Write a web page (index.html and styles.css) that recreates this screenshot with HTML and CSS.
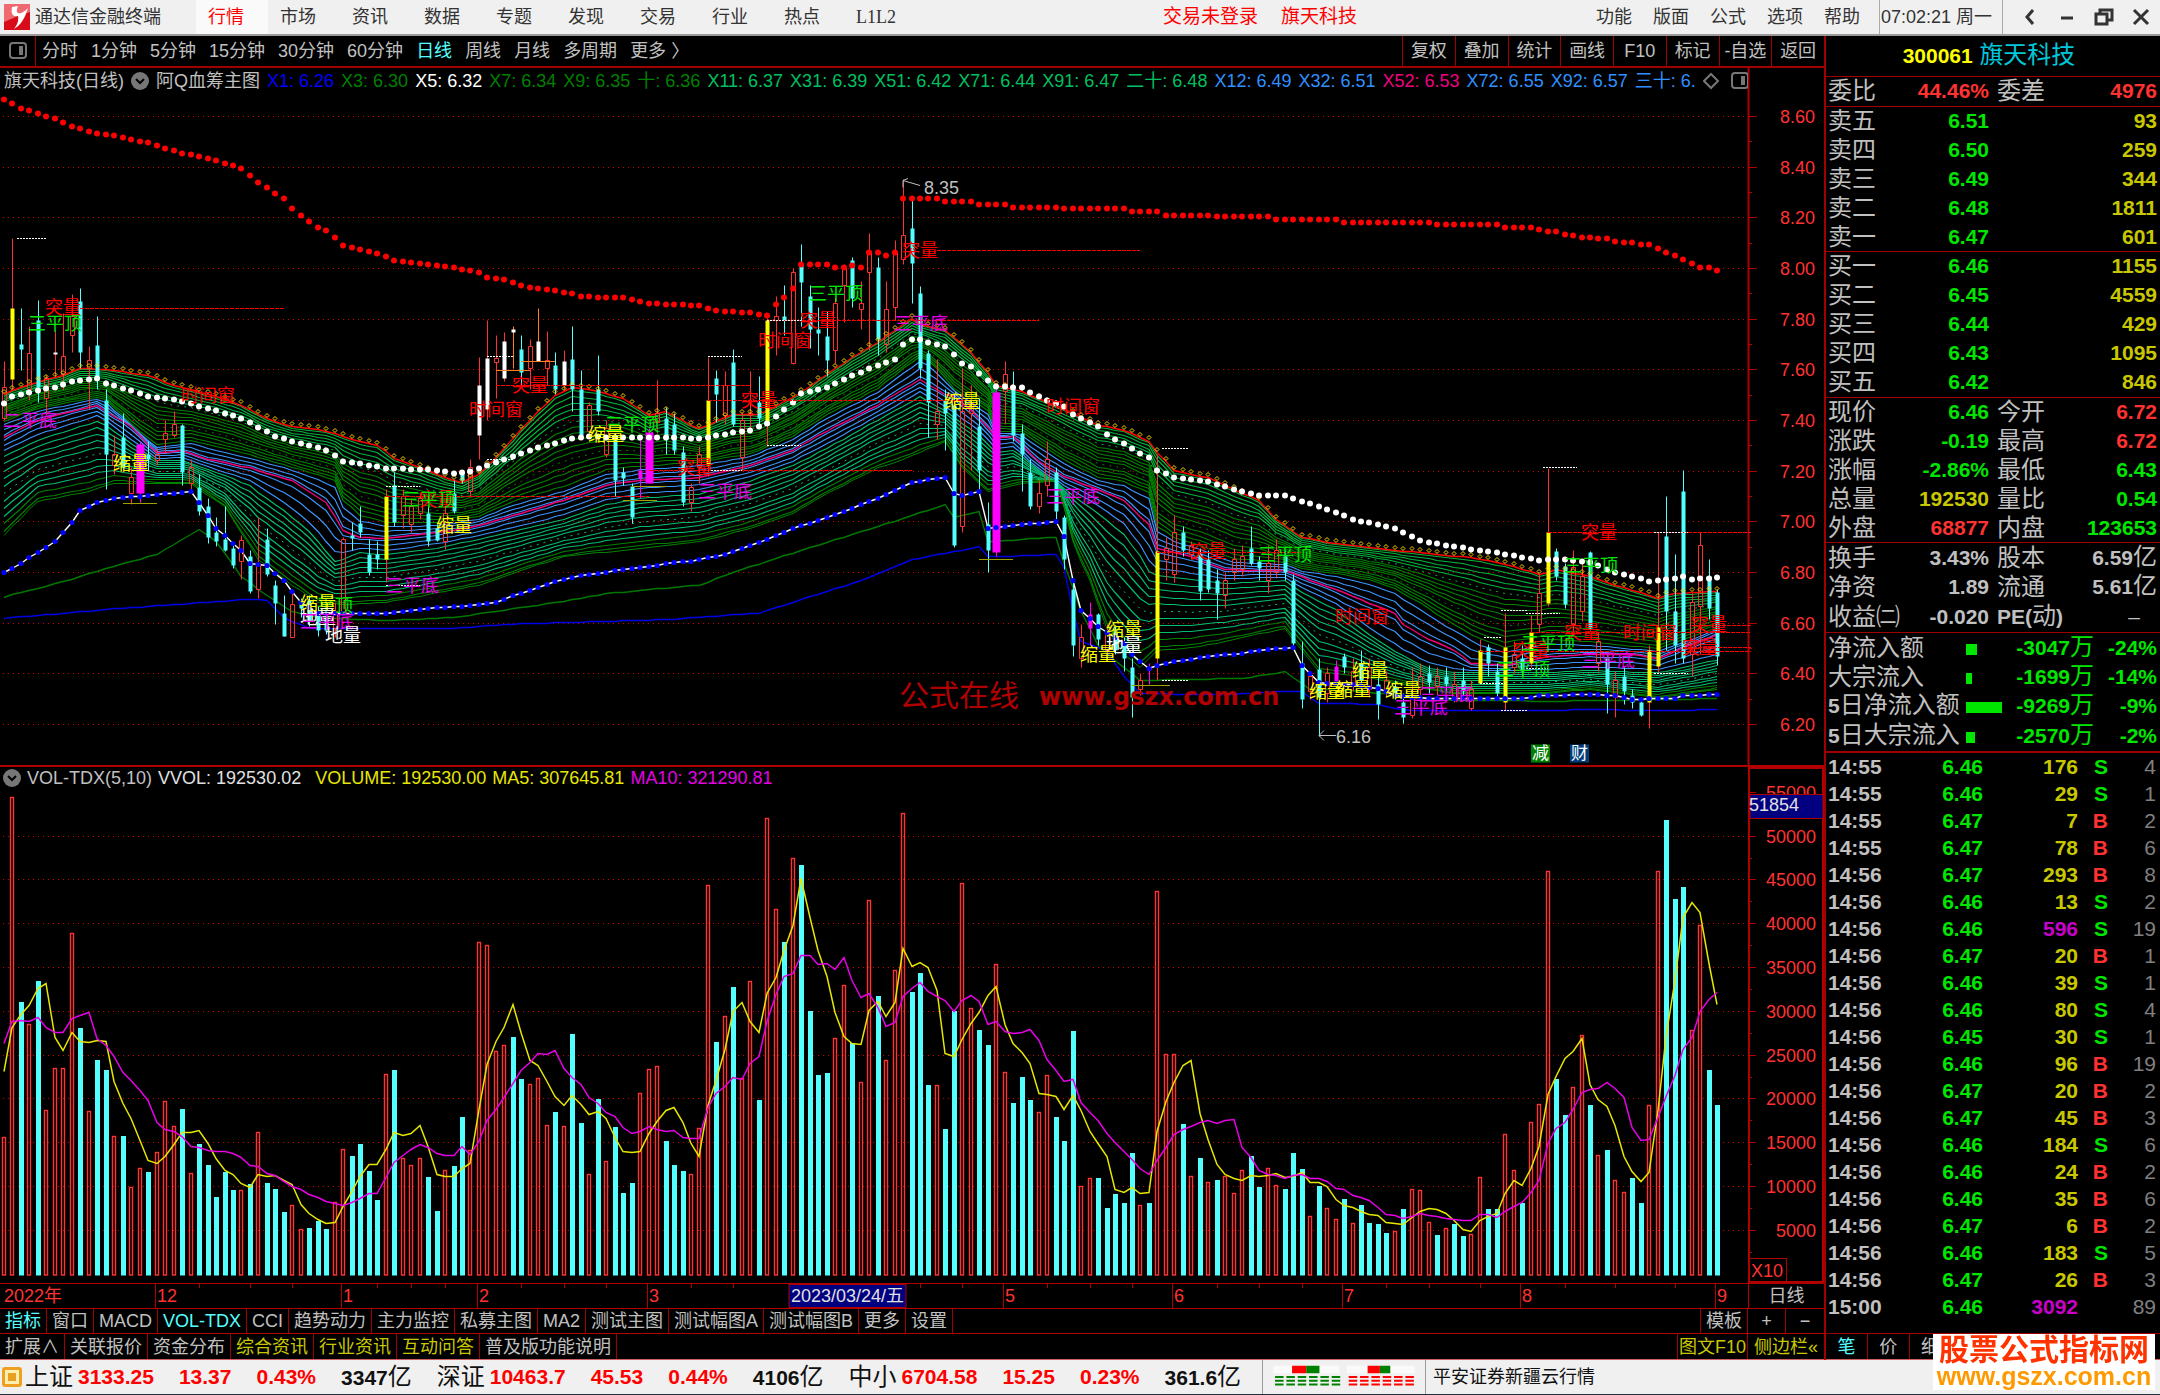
FILE: index.html
```html
<!DOCTYPE html>
<html lang="zh-CN">
<head>
  <meta charset="UTF-8" />
  <meta name="viewport" content="width=device-width, initial-scale=1.0"/>
  <title>通达信金融终端</title>
  <link rel="stylesheet" href="styles.css">
</head>
<body>
  <header class="topbar">
    <svg class="logo" viewBox="0 0 26 26">
      <rect width="26" height="26" fill="#d80c18"/>
      <path d="M0 0H26V8L14 12L0 18Z" fill="#ee6a70"/>
      <path d="M8 3C7 9 8 13 14 12C15 17 13 21 10 25C17 21 21 14 24 4C20 8 17 10 14 9C12 8 13 5 14 2Z" fill="#fff"/>
    </svg>
    <span class="app-name">通达信金融终端</span>
    <nav class="menu">
      <a href="#" class="active">行情</a>
      <a href="#">市场</a>
      <a href="#">资讯</a>
      <a href="#">数据</a>
      <a href="#">专题</a>
      <a href="#">发现</a>
      <a href="#">交易</a>
      <a href="#">行业</a>
      <a href="#">热点</a>
      <a href="#" class="serif">L1L2</a>
    </nav>
    <div class="login"><span>交易未登录</span><span>旗天科技</span></div>
    <nav class="tools">
      <a href="#">功能</a>
      <a href="#">版面</a>
      <a href="#">公式</a>
      <a href="#">选项</a>
      <a href="#">帮助</a>
    </nav>
    <time class="clock">07:02:21 周一</time>
    <div class="window-buttons">
      <button aria-label="后退"><svg viewBox="0 0 20 20"><path d="M13 3L7 10L13 17"/></svg></button>
      <button aria-label="最小化"><svg viewBox="0 0 20 20"><path d="M4 11H16"/></svg></button>
      <button aria-label="还原"><svg viewBox="0 0 20 20"><path d="M2 7H13V17H2ZM6 7V3H18V13H13"/></svg></button>
      <button aria-label="关闭"><svg viewBox="0 0 20 20"><path d="M3 3L17 17M17 3L3 17"/></svg></button>
    </div>
  </header>

  <main class="workspace">
    <section class="charts">
      <div class="toolbar">
        <button class="side-toggle" aria-label="侧栏"><svg viewBox="0 0 18 18"><rect x="1" y="1" width="16" height="15" rx="3"/><path d="M11 4V13M13 4V13"/></svg></button>
        <div class="periods">
          <button>分时</button>
          <button>1分钟</button>
          <button>5分钟</button>
          <button>15分钟</button>
          <button>30分钟</button>
          <button>60分钟</button>
          <button class="active">日线</button>
          <button>周线</button>
          <button>月线</button>
          <button>多周期</button>
          <button>更多 〉</button>
        </div>
        <div class="actions">
          <button>复权</button>
          <button>叠加</button>
          <button>统计</button>
          <button>画线</button>
          <button>F10</button>
          <button>标记</button>
          <button>-自选</button>
          <button>返回</button>
        </div>
      </div>

      <div class="panel price-panel">
        <svg class="plot" id="price-plot"></svg>
        <div class="legend">
          <span>旗天科技(日线)</span>
          <svg class="round" viewBox="0 0 18 18"><circle cx="9" cy="9" r="9"/><path d="M5 7L9 11L13 7"/></svg>
          <span>阿Q血筹主图</span>
          <span class="c-blue">X1: 6.26</span>
          <span class="c-dark">X3: 6.30</span>
          <span class="c-white">X5: 6.32</span>
          <span class="c-dark">X7: 6.34</span>
          <span class="c-dark">X9: 6.35</span>
          <span class="c-dark">十: 6.36</span>
          <span class="c-teal">X11: 6.37</span>
          <span class="c-teal">X31: 6.39</span>
          <span class="c-teal">X51: 6.42</span>
          <span class="c-teal">X71: 6.44</span>
          <span class="c-teal">X91: 6.47</span>
          <span class="c-teal">二十: 6.48</span>
          <span class="c-sky">X12: 6.49</span>
          <span class="c-sky">X32: 6.51</span>
          <span class="c-pink">X52: 6.53</span>
          <span class="c-sky">X72: 6.55</span>
          <span class="c-sky">X92: 6.57</span>
          <span class="c-sky">三十: 6.</span>
          <svg class="corner" viewBox="0 0 48 18"><path d="M8 2L15 9L8 16L1 9Z"/><rect x="29" y="1" width="16" height="15" rx="3"/><path d="M39 4V13M41 4V13"/></svg>
        </div>
      </div>

      <div class="panel volume-panel">
        <svg class="plot" id="volume-plot"></svg>
        <div class="legend compact">
          <svg class="round" viewBox="0 0 18 18"><circle cx="9" cy="9" r="9"/><path d="M5 7L9 11L13 7"/></svg>
          <span>VOL-TDX(5,10)</span>
          <span class="c-light wide">VVOL: 192530.02</span>
          <span class="c-yellow">VOLUME: 192530.00</span>
          <span class="c-yellow">MA5: 307645.81</span>
          <span class="c-magenta">MA10: 321290.81</span>
        </div>
      </div>

      <div class="dates">
        <svg id="date-plot"></svg>
        <span>日线</span>
      </div>

      <div class="tabs">
        <button class="active">指标</button>
        <button>窗口</button>
        <button>MACD</button>
        <button class="active">VOL-TDX</button>
        <button>CCI</button>
        <button>趋势动力</button>
        <button>主力监控</button>
        <button>私募主图</button>
        <button>MA2</button>
        <button>测试主图</button>
        <button>测试幅图A</button>
        <button>测试幅图B</button>
        <button>更多</button>
        <button>设置</button>
        <div class="tabs-end">
          <button>模板</button>
          <button class="zoom">+</button>
          <button class="zoom">−</button>
        </div>
      </div>

      <div class="tabs last">
        <button>扩展∧</button>
        <button>关联报价</button>
        <button>资金分布</button>
        <button class="gold">综合资讯</button>
        <button class="gold">行业资讯</button>
        <button class="gold">互动问答</button>
        <button>普及版功能说明</button>
        <div class="tabs-end">
          <button class="gold f10">图文F10</button>
          <button class="gold sidebar">侧边栏«</button>
        </div>
      </div>
    </section>

    <aside class="quote">
      <h1><b>300061</b> <span>旗天科技</span></h1>

      <table class="block">
        <tr><th>委比</th><td class="up">44.46%</td><th>委差</th><td class="up">4976</td></tr>
      </table>
      <table class="block">
        <tr><th>卖五</th><td class="down">6.51</td><td class="vol" colspan="2">93</td></tr>
        <tr><th>卖四</th><td class="down">6.50</td><td class="vol" colspan="2">259</td></tr>
        <tr><th>卖三</th><td class="down">6.49</td><td class="vol" colspan="2">344</td></tr>
        <tr><th>卖二</th><td class="down">6.48</td><td class="vol" colspan="2">1811</td></tr>
        <tr><th>卖一</th><td class="down">6.47</td><td class="vol" colspan="2">601</td></tr>
      </table>
      <table class="block">
        <tr><th>买一</th><td class="down">6.46</td><td class="vol" colspan="2">1155</td></tr>
        <tr><th>买二</th><td class="down">6.45</td><td class="vol" colspan="2">4559</td></tr>
        <tr><th>买三</th><td class="down">6.44</td><td class="vol" colspan="2">429</td></tr>
        <tr><th>买四</th><td class="down">6.43</td><td class="vol" colspan="2">1095</td></tr>
        <tr><th>买五</th><td class="down">6.42</td><td class="vol" colspan="2">846</td></tr>
      </table>
      <table class="block">
        <tr><th>现价</th><td class="down">6.46</td><th>今开</th><td class="up">6.72</td></tr>
        <tr><th>涨跌</th><td class="down">-0.19</td><th>最高</th><td class="up">6.72</td></tr>
        <tr><th>涨幅</th><td class="down">-2.86%</td><th>最低</th><td class="down">6.43</td></tr>
        <tr><th>总量</th><td class="vol">192530</td><th>量比</th><td class="down">0.54</td></tr>
        <tr><th>外盘</th><td class="up">68877</td><th>内盘</th><td class="down">123653</td></tr>
      </table>
      <table class="block padded">
        <tr><th>换手</th><td>3.43%</td><th>股本</th><td>6.59<i>亿</i></td></tr>
        <tr><th>净资</th><td>1.89</td><th>流通</th><td>5.61<i>亿</i></td></tr>
        <tr><th>收益㈡</th><td>-0.020</td><th><b>PE(</b>动<b>)</b></th><td class="none">–</td></tr>
      </table>
      <table class="block padded flow">
        <tr><th>净流入额</th><td><span class="bar" style="width: 11px"></span></td><td class="down">-3047<i>万</i></td><td class="down">-24%</td></tr>
        <tr><th>大宗流入</th><td><span class="bar" style="width: 6px"></span></td><td class="down">-1699<i>万</i></td><td class="down">-14%</td></tr>
        <tr><th><b>5</b>日净流入额</th><td><span class="bar" style="width: 36px"></span></td><td class="down">-9269<i>万</i></td><td class="down">-9%</td></tr>
        <tr><th><b>5</b>日大宗流入</th><td><span class="bar" style="width: 9px"></span></td><td class="down">-2570<i>万</i></td><td class="down">-2%</td></tr>
      </table>

      <div class="trades">
        <table>
          <tr><td>14:55</td><td>6.46</td><td>176</td><td class="down">S</td><td>4</td></tr>
          <tr><td>14:55</td><td>6.46</td><td>29</td><td class="down">S</td><td>1</td></tr>
          <tr><td>14:55</td><td>6.47</td><td>7</td><td class="up">B</td><td>2</td></tr>
          <tr><td>14:55</td><td>6.47</td><td>78</td><td class="up">B</td><td>6</td></tr>
          <tr><td>14:56</td><td>6.47</td><td>293</td><td class="up">B</td><td>8</td></tr>
          <tr><td>14:56</td><td>6.46</td><td>13</td><td class="down">S</td><td>2</td></tr>
          <tr><td>14:56</td><td>6.46</td><td class="big">596</td><td class="down">S</td><td>19</td></tr>
          <tr><td>14:56</td><td>6.47</td><td>20</td><td class="up">B</td><td>1</td></tr>
          <tr><td>14:56</td><td>6.46</td><td>39</td><td class="down">S</td><td>1</td></tr>
          <tr><td>14:56</td><td>6.46</td><td>80</td><td class="down">S</td><td>4</td></tr>
          <tr><td>14:56</td><td>6.45</td><td>30</td><td class="down">S</td><td>1</td></tr>
          <tr><td>14:56</td><td>6.46</td><td>96</td><td class="up">B</td><td>19</td></tr>
          <tr><td>14:56</td><td>6.47</td><td>20</td><td class="up">B</td><td>2</td></tr>
          <tr><td>14:56</td><td>6.47</td><td>45</td><td class="up">B</td><td>3</td></tr>
          <tr><td>14:56</td><td>6.46</td><td>184</td><td class="down">S</td><td>6</td></tr>
          <tr><td>14:56</td><td>6.46</td><td>24</td><td class="up">B</td><td>2</td></tr>
          <tr><td>14:56</td><td>6.46</td><td>35</td><td class="up">B</td><td>6</td></tr>
          <tr><td>14:56</td><td>6.47</td><td>6</td><td class="up">B</td><td>2</td></tr>
          <tr><td>14:56</td><td>6.46</td><td>183</td><td class="down">S</td><td>5</td></tr>
          <tr><td>14:56</td><td>6.47</td><td>26</td><td class="up">B</td><td>3</td></tr>
          <tr><td>15:00</td><td>6.46</td><td class="big">3092</td><td></td><td>89</td></tr>
        </table>
      </div>

      <div class="quote-tabs">
        <button class="active">笔</button>
        <button>价</button>
        <button>细</button>
      </div>
    </aside>
  </main>

  <footer class="status">
    <svg class="coin" viewBox="0 0 20 20"><rect width="20" height="20" rx="3" fill="#f0a020"/><rect x="3" y="3" width="14" height="14" fill="#fff0b0"/><rect x="6" y="6" width="8" height="8" fill="#e8a020"/></svg>
    <span class="index"><span>上证</span><b class="up">3133.25</b></span><b class="up">13.37</b><b class="up">0.43%</b><span><b>3347</b>亿</span>
    <span class="index"><span>深证</span><b class="up">10463.7</b></span><b class="up">45.53</b><b class="up">0.44%</b><span><b>4106</b>亿</span>
    <span class="index"><span>中小</span><b class="up">6704.58</b></span><b class="up">15.25</b><b class="up">0.23%</b><span><b>361.6</b>亿</span>
    <svg class="breadth" viewBox="0 0 162 36">
      <path d="M6 6H76V14H6ZM84 6H156V14H84Z" fill="#fafafa"/>
      <path d="M26 6H41V14H26ZM106 6H119V14H106Z" fill="#f00"/>
      <path d="M41 6H55V14H41ZM119 6H130V14H119Z" fill="#008000"/>
      <path d="M8 18H78M8 22H78M8 26H78" stroke="#008000" stroke-width="2" stroke-dasharray="9 3"/>
      <path d="M86 18H156M86 22H156M86 26H156" stroke="#f00" stroke-width="2" stroke-dasharray="9 3"/>
    </svg>
    <span class="server">平安证券新疆云行情</span>
  </footer>

  <div class="site-badge">
    <strong>股票公式指标网</strong>
    <span>www.gszx.com.cn</span>
  </div>

  <script src="chart.js"></script>
</body>
</html>
```

FILE: styles.css
```css
* {
  box-sizing: border-box;
}

body {
  margin: 0;
  height: 100vh;
  display: flex;
  flex-direction: column;
  overflow: hidden;
  background: #000;
  color: #c0c0c0;
  font-family: "Liberation Sans", "Noto Sans CJK SC", sans-serif;
  font-size: 18px;
  line-height: 24px;
}

button {
  font: inherit;
  color: inherit;
  background: none;
  border: none;
  padding: 0;
  margin: 0;
  white-space: nowrap;
  cursor: pointer;
}

a {
  color: inherit;
  text-decoration: none;
}

.up { color: #ff3232; }
.down { color: #00e600; }

/* top bar */
.topbar {
  flex: none;
  height: 36px;
  display: flex;
  align-items: center;
  background: #f0f0f0;
  color: #333;
  border-bottom: 2px solid #9a9a9a;
}

.logo {
  width: 26px;
  height: 26px;
  margin: 0 5px 0 4px;
}

.app-name {
  width: 161px;
}

.menu {
  display: flex;
  align-self: stretch;
}

.menu a {
  width: 72px;
  padding-left: 12px;
  line-height: 34px;
}

.menu .active {
  background: #fafafa;
  color: #f00;
}

.serif {
  font-family: "Liberation Serif", serif;
}

.login {
  display: flex;
  gap: 23px;
  margin: 0 auto;
  padding-left: 8px;
  font-size: 19px;
  color: #f00;
}

.tools {
  display: flex;
  gap: 21px;
  margin-right: 19px;
}

.clock {
  width: 124px;
  padding-left: 1px;
  line-height: 34px;
  white-space: nowrap;
  border-left: 1px solid #aaa;
  border-right: 1px solid #aaa;
}

.window-buttons {
  display: flex;
  gap: 17px;
  padding: 0 9px 0 17px;
}

.window-buttons svg {
  display: block;
  width: 20px;
  height: 20px;
  fill: none;
  stroke: #333;
  stroke-width: 3;
}

/* layout */
.workspace {
  flex: 1;
  min-height: 0;
  display: flex;
}

.charts {
  flex: 1;
  min-width: 0;
  display: flex;
  flex-direction: column;
}

/* period toolbar */
.toolbar {
  flex: none;
  height: 32px;
  display: flex;
  align-items: stretch;
  border-bottom: 2px solid #a00000;
}

.toolbar svg,
.corner {
  fill: none;
  stroke: #777;
  stroke-width: 2;
}

.side-toggle {
  width: 36px;
  border-right: 1px solid #a00000;
}

.side-toggle svg {
  display: block;
  width: 18px;
  height: 18px;
  margin: 0 auto;
}

.periods {
  display: flex;
  gap: 13px;
  padding-left: 6px;
}

.periods .active,
.tabs .active,
.quote-tabs .active {
  color: #54ffff;
}

.actions {
  width: 422px;
  margin-left: auto;
  display: grid;
  grid-template-columns: repeat(8, 1fr);
}

.actions button {
  border-left: 1px solid #a00000;
}

/* chart panels */
.panel {
  display: grid;
  min-height: 0;
  grid-template-rows: minmax(0, 1fr);
  grid-template-columns: minmax(0, 1fr);
}

.price-panel {
  flex: 698 1 0;
  border-bottom: 2px solid #b00000;
}

.volume-panel {
  flex: 517 1 0;
}

.plot,
.legend {
  grid-area: 1 / 1;
}

.plot {
  width: 100%;
  height: 100%;
}

.legend {
  align-self: start;
  display: flex;
  align-items: center;
  gap: 7px;
  height: 26px;
  margin-right: 76px;
  padding-left: 4px;
  white-space: nowrap;
  overflow: hidden;
}

.legend.compact {
  gap: 6px;
  height: 22px;
  padding-left: 3px;
}

.round {
  width: 18px;
  height: 18px;
  flex: none;
  fill: #777;
}

.round path {
  fill: none;
  stroke: #000;
  stroke-width: 2;
}

.corner {
  width: 48px;
  height: 18px;
  flex: none;
  margin-left: auto;
  margin-right: 5px;
}

.c-blue { color: #0000ff; }
.c-dark { color: #008000; }
.c-white { color: #fff; }
.c-light { color: #e0e0e0; }
.c-teal { color: #00c060; }
.c-sky { color: #3090ff; }
.c-pink { color: #f00080; }
.c-yellow { color: #e6e600; }
.c-magenta { color: #e600e6; }

.wide {
  margin-right: 8px;
}

/* svg text */
.plot text,
.dates text {
  font-size: 18px;
  dominant-baseline: central;
}

.plot .mark-zh {
  font-size: 30px;
}

.plot .mark-en {
  font-family: "DejaVu Sans", sans-serif;
  font-size: 24px;
  font-weight: bold;
}

.plot .flag {
  font-size: 17px;
}

/* dates */
.dates {
  flex: none;
  height: 25px;
  display: flex;
  border-top: 1px solid #b00000;
}

.dates svg {
  flex: 1;
  min-width: 0;
  height: 24px;
}

.dates span {
  width: 76px;
  text-align: center;
  border-left: 1px solid #b00000;
}

/* tabs */
.tabs {
  flex: none;
  height: 25px;
  display: flex;
  align-items: stretch;
  border-top: 1px solid #b00000;
}

.tabs.last {
  height: 27px;
  border-bottom: 1px solid #d06060;
}

.tabs button {
  padding: 0 5px;
  line-height: 22px;
  border-right: 1px solid #a00000;
}

.tabs-end {
  display: flex;
  margin-left: auto;
  border-left: 1px solid #a00000;
}

.tabs .zoom {
  width: 38px;
}

.tabs .f10 {
  padding: 0 1px;
}

.tabs .sidebar {
  width: 76px;
  padding: 0;
}

.tabs-end button:last-child {
  border-right: none;
}

.gold {
  color: #c8c800;
}

/* quote panel */
.quote {
  width: 336px;
  flex: none;
  display: flex;
  flex-direction: column;
  border-left: 2px solid #a00000;
}

.quote h1 {
  flex: none;
  height: 40px;
  margin: 0;
  padding-right: 8px;
  text-align: center;
  line-height: 38px;
  font-size: 24px;
  font-weight: normal;
  color: #00c8dc;
}

.quote h1 b {
  font-size: 21px;
  color: #ff0;
}

.quote table {
  width: 100%;
  table-layout: fixed;
  border-collapse: collapse;
}

.quote td,
.quote th {
  padding: 0;
  white-space: nowrap;
}

.block {
  flex: none;
  border-top: 1px solid #a00000;
}

.block tr {
  height: 29px;
}

.block th {
  width: 72px;
  padding-left: 2px;
  text-align: left;
  font-size: 24px;
  line-height: 28px;
  font-weight: normal;
}

.block th b {
  font-size: 21px;
}

.block th:nth-child(3) {
  width: 84px;
  padding-left: 8px;
}

.block td {
  padding-right: 3px;
  text-align: right;
  font-size: 21px;
  line-height: 28px;
  font-weight: bold;
}

.block td:nth-child(2) {
  width: 91px;
  padding: 0;
}

.block i {
  font-size: 24px;
  font-style: normal;
  font-weight: normal;
}

.block .vol {
  color: #c8c800;
}

.block .none {
  padding-right: 20px;
  font-weight: normal;
}

.padded tr:last-child {
  height: 31px;
}

.flow th {
  width: 140px;
}

.flow td:nth-child(2) {
  width: 38px;
  text-align: left;
}

.flow td:nth-child(3) {
  width: 90px;
  padding: 0;
}

.bar {
  display: inline-block;
  height: 11px;
  background: #00e600;
}

/* trades */
.trades {
  flex: 1;
  min-height: 0;
  overflow: hidden;
  border-top: 2px solid #a00000;
}

.trades tr {
  height: 27px;
}

.trades td {
  text-align: right;
  font-size: 21px;
  font-weight: bold;
}

.trades td:nth-child(1) {
  width: 72px;
  padding-left: 2px;
  text-align: left;
}

.trades td:nth-child(2) {
  width: 85px;
  color: #00e600;
}

.trades td:nth-child(3) {
  width: 95px;
  color: #c8c800;
}

.trades td:nth-child(4) {
  width: 30px;
}

.trades td:nth-child(5) {
  padding-right: 4px;
  color: #808080;
  font-weight: normal;
}

.trades td.big:nth-child(3) {
  color: #c800c8;
}

.quote-tabs {
  flex: none;
  height: 27px;
  display: grid;
  grid-template-columns: repeat(8, 1fr);
  border-top: 1px solid #a00000;
  border-bottom: 1px solid #d06060;
}

.quote-tabs button {
  border-right: 1px solid #a00000;
}

/* status bar */
.status {
  flex: none;
  height: 35px;
  display: flex;
  align-items: center;
  gap: 25px;
  background: #f0f0f0;
  color: #111;
  font-size: 24px;
  white-space: nowrap;
  border-bottom: 1px solid #203040;
}

.status b {
  font-size: 21px;
}

.status .up {
  color: #f00;
}

.coin {
  width: 20px;
  height: 20px;
  margin: 0 -22px 0 2px;
}

.index {
  display: flex;
  align-items: center;
  gap: 5px;
}

.breadth {
  width: 164px;
  height: 34px;
  margin: 0 -18px 0 -4px;
  border-left: 1px solid #999;
  border-right: 1px solid #999;
}

.server {
  font-size: 18px;
}

.site-badge {
  position: fixed;
  right: 5px;
  bottom: 5px;
  width: 222px;
  height: 56px;
  background: #fff;
  text-align: center;
}

.site-badge strong,
.site-badge span {
  display: block;
}

.site-badge strong {
  color: #ff3300;
  font-size: 30px;
  line-height: 32px;
}

.site-badge span {
  color: #ff9900;
  font-size: 25px;
  line-height: 20px;
  font-weight: bold;
}
```

FILE: chart.js
```js
const RED = "#ff3232";
const CYAN = "#54ffff";
const LINE = "#b00000";
const AXIS = 76;
const BARS = 203;

// r up, c down, y volume burst, w white, m shrink, o doji: high, body top, body bottom, low
const candles = `
r 625 685 755 760|y 342 503 667 690|c 503 585 596 645|r 545 607 690 715|c 485 530 685 720|r 657 665 710 750|w 550 605 609 660|r 515 613 655 690
r 470 520 565 605|c 457 487 605 640|r 590 622 640 735|c 520 588 665 690|c 690 715 840 920|r 795 840 865 885|c 745 800 870 872|r 870 892 930 955
m 810 817 930 950|c 810 840 850 875|r 825 838 852 865|r 760 790 805 835|r 740 770 795 800|c 770 773 880 910|r 850 870 905 920|c 885 915 970 980
c 940 960 1030 1045|c 985 1020 1040 1052|c 960 1035 1060 1062|c 1045 1055 1095 1103|r 1025 1038 1085 1128|c 1060 1075 1155 1160|r 985 1090 1150 1172|c 1010 1035 1115 1120
c 1130 1140 1183 1230|c 1165 1205 1258 1258|r 1150 1185 1260 1262|c 1170 1180 1195 1215|c 1165 1175 1225 1235|c 1190 1205 1245 1258|c 1200 1215 1245 1255|r 1180 1200 1240 1260
r 1030 1035 1205 1210|c 995 1025 1032 1060|c 958 998 1018 1030|c 1035 1070 1110 1118|c 1040 1070 1082 1105|y 920 935 1080 1135|c 880 910 995 1005|r 920 935 980 1010
r 940 960 1000 1018|r 930 940 975 990|c 960 975 1040 1052|c 1000 1010 1038 1040|r 960 975 1040 1058|c 900 930 970 975|c 875 882 900 905|r 850 870 925 935
w 615 680 795 850|w 530 618 735 760|r 565 618 628 710|w 558 578 663 670|o 545 550 557 640|c 565 597 650 680|r 575 590 640 690|o 503 578 625 625
r 555 622 640 680|c 605 635 690 700|w 600 625 680 690|c 545 620 690 740|c 645 690 795 800|r 720 725 785 790|c 612 690 740 750|r 760 780 840 845
c 790 800 900 935|c 870 880 895 910|c 905 912 985 997|m 800 875 895 940|m 780 788 905 905|r 668 745 765 790|c 730 755 805 840|c 745 770 830 840
c 820 835 950 960|r 905 915 950 970|r 820 840 870 905|y 615 715 865 890|c 645 665 700 765|r 648 680 750 770|c 597 628 770 775|r 745 760 845 875
r 648 745 750 790|c 660 720 755 780|y 525 530 773 820|r 475 520 530 610|c 450 520 530 565|r 410 420 630 632|c 355 402 442 545|c 450 475 550 595
c 500 550 560 612|c 510 567 623 660|r 480 490 600 630|r 400 408 450 535|c 385 392 480 500|r 440 490 505 552|r 330 370 420 600|c 385 408 575 610
r 440 505 585 605|r 345 375 500 530|r 205 335 390 400|c 250 318 398 490|c 452 468 640 665|c 600 607 720 800|r 620 740 770 805|c 690 715 745 830
c 700 725 1050 1053|r 640 740 1005 1018|r 680 720 745 875|c 710 775 875 930|c 950 1000 1060 1110|m 675 697 1065 1075|r 625 655 695 770|c 648 690 795 810
c 770 790 840 925|c 850 880 960 965|r 900 930 960 975|r 810 850 910 935|c 870 880 970 990|c 980 985 1080 1105|c 1130 1150 1280 1305|r 1230 1260 1310 1330
m 1180 1207 1240 1280|c 1205 1207 1265 1280|r 1230 1250 1290 1310|c 1235 1250 1290 1300|c 1260 1280 1310 1340|c 1310 1330 1400 1445|r 1345 1360 1380 1395|m 1320 1330 1338 1370
y 840 1063 1310 1360|r 1030 1055 1080 1130|r 980 1020 1115 1135|c 1005 1018 1060 1075|r 1040 1050 1070 1080|c 1055 1070 1155 1175|c 1060 1080 1150 1158|c 1105 1130 1160 1220
r 1110 1130 1165 1195|r 1055 1080 1110 1130|r 1050 1075 1105 1120|c 1005 1055 1090 1095|c 1075 1085 1103 1130|r 1050 1090 1130 1160|r 1035 1060 1110 1125|c 1060 1075 1110 1130
c 1115 1130 1275 1285|c 1270 1320 1405 1425|r 1340 1350 1385 1405|c 1310 1335 1400 1488|r 1330 1345 1390 1410|m 1315 1327 1362 1370|c 1298 1305 1330 1345|r 1310 1340 1370 1385
c 1290 1320 1360 1380|r 1310 1330 1380 1400|c 1345 1370 1415 1450|r 1340 1360 1390 1400|c 1360 1375 1400 1405|c 1390 1410 1445 1460|r 1330 1400 1440 1448|r 1320 1350 1380 1400
c 1325 1345 1365 1390|r 1330 1350 1375 1395|c 1330 1350 1370 1385|r 1340 1370 1400 1410|c 1330 1360 1385 1400|r 1360 1380 1425 1430|y 1265 1290 1367 1370|c 1278 1285 1320 1350
c 1320 1340 1390 1400|y 1205 1285 1410 1430|r 1270 1300 1330 1345|c 1280 1310 1340 1350|y 1210 1250 1320 1330|r 1115 1160 1230 1250|y 872 1018 1183 1190|c 1055 1062 1120 1130
c 1090 1098 1185 1195|r 1060 1100 1230 1250|r 1080 1120 1200 1225|c 1062 1065 1240 1245|r 1250 1270 1320 1340|c 1300 1310 1370 1435|r 1340 1360 1400 1445|c 1330 1350 1385 1415
c 1380 1395 1410 1425|c 1400 1410 1440 1442|y 1280 1290 1410 1470|y 1020 1238 1327 1345|c 935 1027 1200 1290|c 1070 1200 1280 1320|c 877 925 1310 1320|r 1160 1180 1300 1350
r 1020 1050 1190 1300|c 1080 1120 1195 1220|c 1150 1158 1305 1325`.trim().split(/[|\n]/).map(s => {
  const [kind, ...v] = s.split(" ");
  return [kind, ...v.map(Number)];
});

const volumes = `
r1125 r103 c719 r788 c656 r1045 r918 r918 r513 c800 r1048 c894 c926 r1124 c1124 r1277 r1220 c1232 r1170 r1017 r1093 c1043 r1233 c1146 c1210
c1308 c1232 c1286 r1287 c1268 r1110 c1263 c1281 c1353 r1332 r1404 c1399 c1380 c1403 r1323 r1161 c1183 c1146 c1227 c1317 r936 c926 r1188 r1211 r1188
c1246 c1349 r1224 c1214 c1065 r1165 r540 r549 r869 r851 c827 c953 r967 r949 r1089 c1052 r1093 c818 c1083 r1238 c1011 r1197 c1097 c1295 c1263
r995 r922 r913 c1138 c1210 c1228 r1238 r1098 r370 c840 r761 c674 r950 r657 c1016 r166 r441 c539 r288 c308 c746 c939 c935 r828 r670
c845 r962 r414 c702 r895 r625 r152 c691 c632 c970 r971 c1101 c747 r364 r738 c804 c849 r607 r931 c1025 c947 c1016 r1052 r940 c1065
c1137 c809 r1273 r1250 c1249 c1340 c1299 c1326 c1173 r1332 c1326 r387 r877 r877 c1087 r1242 c1190 r1260 c1254 r1242 r1296 r1224 c1182 c1276 r1219
r1269 c1281 c1173 c1222 r1363 c1272 r1341 r1372 c1312 r1386 c1331 c1384 c1389 c1416 r1408 c1344 r1282 r1287 r1382 c1420 r1399 c1389 c1425 r1417 r1246
c1344 c1344 r1116 r1224 c1326 r1080 r1026 r328 c952 c1061 r976 r819 c1029 r1180 c1164 r1255 r1291 c1249 c1326 r1030 r328 c173 c412 c376 r805
r490 c926 c1029`.trim().split(/\s+/).map(s => [s[0], 1541 - Number(s.slice(1))]);

// curves: bar index, level
const resistance = [[0,20],[2,41],[6,65],[8,83],[11,100],[13,104],[17,121],[21,145],[24,156],[28,180],[30,211],[33,249],[34,273],[37,315],[38,322],[40,357],[44,375],[46,391],[49,399],[53,408],[56,419],[57,432],[59,436],[61,450],[67,468],[68,475],[73,478],[76,491],[82,496],[84,508],[88,512],[90,519],[91,494],[92,478],[93,457],[94,402],[97,402],[98,408],[99,408],[100,403],[101,408],[102,373],[103,373],[104,380],[105,373],[106,248],[110,249],[111,256],[114,256],[115,263],[118,263],[119,270],[124,270],[125,273],[132,273],[133,280],[136,280],[137,287],[142,287],[143,290],[149,290],[150,297],[157,297],[158,304],[168,304],[169,308],[176,308],[177,315],[180,315],[182,325],[183,325],[184,331],[186,338],[189,342],[190,349],[192,350],[193,356],[194,356],[196,373],[198,390],[200,408],[201,408],[202,414]];

const middle = [[0,722],[1,706],[4,691],[6,685],[8,671],[11,664],[12,675],[15,692],[17,706],[20,713],[22,722],[25,738],[28,755],[31,787],[32,798],[35,813],[38,829],[39,841],[40,855],[42,860],[45,871],[51,875],[53,882],[55,879],[58,857],[60,843],[63,824],[67,802],[69,798],[75,801],[79,800],[82,803],[85,792],[88,783],[90,768],[93,720],[94,698],[97,685],[100,658],[103,633],[105,619],[106,585],[107,575],[108,575],[111,591],[112,608],[113,629],[114,636],[116,668],[117,682],[120,685],[122,706],[125,729],[126,747],[129,775],[130,793],[132,814],[135,847],[136,877],[138,891],[142,902],[145,920],[148,933],[151,934],[154,953],[157,973],[159,988],[164,1010],[165,1018],[167,1038],[171,1051],[176,1066],[181,1083],[183,1080],[187,1088],[190,1111],[194,1131],[196,1128],[198,1121],[199,1127],[202,1123]];

const upper = [[0,700],[1,692],[4,672],[7,657],[9,640],[12,643],[17,657],[20,680],[25,706],[28,725],[31,757],[34,775],[38,785],[42,810],[44,818],[46,848],[49,868],[52,893],[54,904],[56,886],[59,825],[62,760],[65,702],[67,685],[70,693],[73,711],[75,735],[76,750],[78,740],[81,772],[82,780],[84,763],[86,746],[89,748],[91,728],[94,697],[97,655],[100,615],[103,580],[106,540],[107,525],[108,540],[111,553],[113,585],[114,603],[116,650],[117,680],[120,695],[125,735],[129,772],[132,783],[135,808],[136,835],[138,877],[142,893],[145,920],[148,945],[150,990],[153,1030],[157,1045],[164,1060],[173,1077],[177,1092],[181,1115],[183,1105],[187,1120],[190,1140],[194,1163],[195,1170],[197,1160],[202,1155]];

const blueTop = [[0,765],[4,735],[11,709],[12,715],[16,790],[18,820],[22,810],[28,838],[33,865],[39,902],[40,950],[42,985],[45,1000],[51,1000],[56,985],[60,952],[66,920],[71,880],[75,870],[82,860],[88,840],[93,800],[97,750],[103,690],[108,615],[109,625],[111,665],[112,690],[116,740],[117,790],[120,790],[125,855],[129,895],[132,905],[135,930],[136,1010],[138,1035],[142,1060],[145,1085],[151,1090],[153,1105],[157,1115],[161,1130],[164,1150],[167,1185],[170,1225],[174,1270],[177,1290],[182,1270],[187,1275],[192,1285],[195,1290],[198,1270],[202,1240]];

const pink = [[0,800],[4,760],[11,725],[12,740],[15,775],[18,835],[21,830],[24,850],[29,870],[34,900],[38,950],[40,1015],[42,1030],[45,1033],[51,1020],[56,1003],[60,980],[66,945],[71,910],[75,898],[82,893],[88,865],[93,830],[97,785],[103,725],[108,667],[111,700],[112,705],[115,755],[117,800],[119,798],[122,855],[125,890],[129,920],[132,945],[135,1000],[136,1055],[140,1075],[144,1105],[151,1107],[157,1150],[164,1205],[165,1230],[168,1265],[171,1290],[173,1320],[177,1325],[182,1305],[187,1300],[192,1300],[195,1310],[198,1285],[202,1255]];

const blueBottom = [[0,835],[4,800],[11,755],[12,765],[15,810],[18,850],[21,850],[24,870],[29,905],[33,960],[36,1010],[39,1080],[40,1075],[42,1060],[45,1065],[51,1050],[56,1030],[60,1012],[66,985],[71,950],[75,935],[82,925],[88,895],[93,860],[97,820],[103,755],[108,700],[111,735],[115,790],[117,830],[119,825],[122,875],[125,915],[129,965],[132,1010],[134,1060],[135,1100],[136,1110],[140,1120],[144,1130],[151,1125],[153,1150],[157,1190],[161,1250],[164,1290],[168,1330],[171,1340],[182,1340],[187,1335],[195,1340],[202,1310]];

const greenBottom = [[0,1025],[4,947],[10,925],[13,905],[22,905],[26,960],[30,1080],[34,1140],[37,1180],[40,1185],[45,1180],[56,1140],[62,1100],[66,1075],[75,1055],[82,1040],[88,1010],[93,975],[97,930],[103,870],[106,850],[111,810],[113,870],[116,925],[120,905],[124,900],[125,960],[126,1040],[128,1130],[130,1240],[132,1300],[134,1330],[136,1290],[140,1285],[144,1270],[151,1240],[153,1290],[155,1340],[160,1350],[168,1380],[171,1390],[182,1390],[187,1380],[195,1400],[202,1380]];

const support = [[0,1112],[2,1090],[6,1040],[7,1020],[8,995],[9,968],[11,950],[13,940],[16,935],[19,930],[22,925],[23,950],[25,1010],[28,1060],[29,1090],[31,1095],[33,1130],[35,1180],[37,1205],[45,1205],[51,1191],[54,1190],[58,1180],[60,1165],[65,1132],[67,1122],[71,1110],[75,1100],[79,1088],[81,1085],[85,1070],[88,1050],[90,1035],[93,1010],[97,985],[101,955],[103,940],[107,903],[111,892],[112,928],[113,933],[115,925],[116,1010],[119,1003],[124,993],[125,1028],[126,1130],[127,1198],[129,1235],[132,1275],[133,1300],[135,1333],[137,1320],[142,1305],[146,1297],[148,1290],[152,1284],[153,1325],[155,1365],[159,1370],[162,1378],[164,1395],[168,1402],[179,1402],[181,1395],[187,1392],[190,1395],[192,1403],[197,1402],[198,1395],[202,1392]];

const deepGreen = [[0,1168],[8,1127],[12,1102],[18,1070],[23,1012],[25,1040],[28,1120],[31,1165],[34,1200],[37,1215],[45,1222],[53,1215],[60,1195],[66,1178],[71,1160],[82,1140],[88,1098],[94,1060],[103,1005],[111,955],[112,985],[115,970],[116,1040],[120,1035],[124,1030],[125,1090],[127,1200],[129,1280],[132,1330],[134,1360],[146,1355],[151,1340],[154,1380],[160,1385],[170,1405],[182,1408],[202,1402]];

const deepBlue = [[0,1217],[13,1195],[29,1173],[31,1175],[33,1215],[36,1240],[53,1240],[60,1230],[71,1224],[78,1220],[85,1210],[89,1205],[101,1130],[107,1082],[115,1052],[116,1075],[124,1070],[125,1100],[126,1200],[127,1270],[130,1290],[132,1350],[134,1390],[144,1393],[151,1385],[153,1385],[155,1413],[162,1415],[165,1428],[179,1430],[188,1427],[195,1430],[202,1427]];

// signal text: bar, level, text, colour
const signals = [
  [5,500,"突量","#f00"],[3,538,"三平顶","#00e600"],[0,760,"二平底","#e600e6"],[13,860,"缩量","#ff0"],[21,704,"时间窗","#f00"],
  [60,680,"突量","#f00"],[55,735,"时间窗","#f00"],[71,770,"三平顶","#00e600"],[69,793,"缩量","#ff0"],[79.5,870,"突量","#f00"],
  [82,925,"三平底","#e600e6"],[87,715,"突量","#f00"],[89,577,"时间窗","#f00"],[94,530,"突量","#f00"],[95,468,"三平顶","#00e600"],
  [49,942,"突量","#f00"],[47,942,"三平顶","#00e600"],[51,1003,"缩量","#ff0"],[45,1140,"三平底","#e600e6"],
  [37,1188,"平顶","#00e600"],[35,1183,"缩量","#ff0"],[35,1215,"地量","#fff"],[35,1225,"三平底","#e600e6"],[38,1257,"地量","#fff"],
  [106,368,"突量","#f00"],[105,538,"三平底","#e600e6"],[111,718,"缩量","#ff0"],[123,728,"时间窗","#f00"],[123,935,"三平底","#e600e6"],
  [140,1062,"突量","#f00"],[148,1070,"三平顶","#00e600"],[157,1212,"时间窗","#f00"],[130,1242,"缩量","#ff0"],[130,1280,"地量","#fff"],
  [127,1300,"缩量","#ff0"],[159,1338,"缩量","#ff0"],[154,1385,"缩量","#ff0"],[157,1380,"缩量","#ff0"],[163,1383,"缩量","#ff0"],
  [167,1392,"三平底","#e600e6"],[164,1422,"三平底","#e600e6"],[186,1018,"突量","#f00"],[184,1096,"三平顶","#00e600"],
  [184,1250,"突量","#f00"],[191,1250,"时间窗","#f00"],[199,1230,"突量","#f00"],[198,1285,"突量","#f00"],[178,1290,"突量","#f00"],
  [179,1275,"三平顶","#00e600"],[176,1335,"三平顶","#00e600"],[186,1315,"三平底","#e600e6"]
];

// horizontal levels: from bar, to bar, level
const redLevels = [[9,33,503],[58,88,680],[90,122,530],[83,115,715],[45,76,936],[76,107,877],[110,134,369],[136,153,1065],[182,206,1018],[180,206,1250],[199,206,1233],[174,206,1293],[198,206,1285]];
const whiteLevels = [[1.5,5,341],[57,60,614],[57,60,850],[45,49,912],[45,49,1140],[83,87,614],[83,87,877],[90,94,530],[90,94,818],[136.5,139.6,825],[136.5,139.6,1361],[181.5,185.5,870],[176.5,179.7,1198],[179.5,183.5,1206],[174.5,176.6,1262],[176.5,179.7,1430],[174,177,1368],[179.5,182,1333],[194.5,198.5,1019],[194.5,198.5,1344]];
const oliveLevels = [[14,18,953],[73,77,946],[74,78,912],[115,119,1081],[133,137.5,1372]];
const orangeLevels = [[58,62,645],[61,65,625]];

function at(curve, i) {
  for (let k = 1; k < curve.length; k++) {
    if (i <= curve[k][0]) {
      const [x0, y0] = curve[k - 1];
      const [x1, y1] = curve[k];
      return y0 + (y1 - y0) * (i - x0) / (x1 - x0);
    }
  }
  return curve[curve.length - 1][1];
}

function polyline(points, color, extra = "") {
  return `<polyline points="${points.join(" ")}" fill="none" stroke="${color}" ${extra}/>`;
}

function hline(x0, x1, y, color, extra = "") {
  return `<path d="M${x0} ${y}H${x1}" stroke="${color}" ${extra}/>`;
}

function text(x, y, s, fill, extra = "") {
  return `<text x="${x}" y="${y}" fill="${fill}" ${extra}>${s}</text>`;
}

function drawPrice() {
  const svg = document.getElementById("price-plot");
  const W = svg.clientWidth - AXIS;
  const H = svg.clientHeight;
  const pitch = W / 206.1;
  const X = i => Math.round(4 + i * pitch);
  const Y = u => Math.round(22 + u * (H - 22) / 1556) + 0.5;
  let out = "";

  for (let k = 0; k <= 24; k++) {
    const y = Y(60 + k * 58.4);
    if (k % 2 === 0) {
      out += hline(3, W, y, "#d00000", 'stroke-dasharray="1 4"');
      out += hline(W, W + 9, y, LINE);
      out += text(W + 67, y, (8.6 - k / 10).toFixed(2), RED, 'text-anchor="end"');
    } else {
      out += hline(W, W + 4, y, LINE);
    }
  }
  out += `<path d="M${W + 0.5} 0V${H}" stroke="${LINE}" stroke-width="2"/>`;

  // chip distribution bands
  const bands = [
    [upper, blueTop, 16, n => n < 6 ? "#00b83c" : "#008400"],
    [blueTop, pink, 3, () => "#3c96ff"],
    [pink, blueBottom, 3, () => "#3c96ff"],
    [blueBottom, greenBottom, 11, n => n < 9 ? "#00c070" : "#008400"]
  ];
  for (const [a, b, count, color] of bands) {
    for (let n = 0; n < count; n++) {
      const t = (n + 0.5) / count;
      const pts = [];
      for (let i = 0; i < BARS; i++) pts.push(`${X(i)},${Y(at(a, i) * (1 - t) + at(b, i) * t)}`);
      out += polyline(pts, color(n), n % 6 === 5 ? 'stroke-dasharray="2 5"' : 'stroke-width="1.2"');
    }
  }
  const trace = c => candles.map((_, i) => `${X(i)},${Y(at(c, i))}`);
  out += polyline(trace(greenBottom), "#008400");
  out += polyline(trace(pink), "#f00078", 'stroke-width="1.4"');
  out += polyline(trace(deepGreen), "#007800", 'stroke-width="1.4"');
  out += polyline(trace(deepBlue), "#0000e6", 'stroke-width="1.4"');
  out += polyline(trace(upper), "#f00", 'stroke-width="1.4"');
  out += polyline(trace(support), "#fff", 'stroke-width="1.4"');

  // candles
  const colors = { r: RED, c: CYAN, y: "#ff0", w: "#fff", m: "#f0f", o: "#ff8020" };
  candles.forEach(([kind, high, top, bottom, low], i) => {
    const x = X(i) + 0.5;
    const color = colors[kind];
    const y0 = Y(top);
    const h = Math.max(Y(bottom) - y0, 2);
    const wick = kind === "y" || kind === "w" ? RED : color;
    if (kind === "r") {
      out += `<path d="M${x} ${Y(high)}V${y0}M${x} ${y0 + h}V${Y(low)}M${x - 2} ${y0}h4v${h}h-4z" fill="none" stroke="${color}"/>`;
    } else {
      const w = kind === "m" && bottom - top > 100 ? 8 : 4;
      out += `<path d="M${x} ${Y(high)}V${Y(low)}" stroke="${wick}"/>`;
      out += `<rect x="${x - w / 2}" y="${y0}" width="${w}" height="${h}" fill="${kind === "o" ? "#fff" : color}"/>`;
    }
  });

  // dotted indicators
  for (let i = 0; i < BARS; i++) {
    const x = X(i);
    const yu = Y(at(upper, i) - 7);
    out += `<path d="M${x} ${yu - 2}l2 2l-2 2l-2 -2z" fill="none" stroke="#ffd800"/>`;
    out += `<circle cx="${x}" cy="${Y(at(resistance, i))}" r="3" fill="#f00"/>`;
    out += `<circle cx="${x}" cy="${Y(at(middle, i))}" r="3" fill="#fff"/>`;
    out += `<circle cx="${x}" cy="${Y(at(support, i))}" r="2.6" fill="#00f"/>`;
  }

  redLevels.forEach(([a, b, u]) => out += hline(X(a), X(b), Y(u), "#f00", 'stroke-dasharray="4 1"'));
  whiteLevels.forEach(([a, b, u]) => out += hline(X(a), X(b), Y(u), "#fff", 'stroke-dasharray="2 1"'));
  oliveLevels.forEach(([a, b, u]) => out += hline(X(a), X(b), Y(u), "#a0a000"));
  orangeLevels.forEach(([a, b, u]) => out += hline(X(a), X(b), Y(u), "#ff8020"));
  signals.forEach(([i, u, s, color]) => out += text(X(i) - 1, Y(u), s, color));

  out += text(X(108.5), Y(224), "8.35", "#c0c0c0");
  out += `<path d="M${X(108)} ${Y(220)}L${X(106)} ${Y(208)}M${X(106) + 5} ${Y(203)}L${X(106)} ${Y(208)}v7" fill="none" stroke="#c0c0c0"/>`;
  out += text(X(157), Y(1490), "6.16", "#c0c0c0");
  out += `<path d="M${X(157)} ${Y(1486)}H${X(155)}m5 -5l-5 5l5 5" fill="none" stroke="#c0c0c0"/>`;

  out += text(X(105.5), Y(1395), "公式在线", "#b00000", 'class="mark-zh"');
  out += text(X(122), Y(1398), "www.gszx.com.cn", "#b00000", 'class="mark-en"');
  [[180, "减", "#008000"], [184.7, "财", "#003c78"]].forEach(([i, s, bg]) => {
    out += `<rect x="${X(i)}" y="${Y(1508)}" width="19" height="18" fill="${bg}"/>`;
    out += text(X(i) + 1, Y(1529), s, "#fff", 'class="flag"');
  });
  svg.innerHTML = out;
}

function drawVolume() {
  const svg = document.getElementById("volume-plot");
  const W = svg.clientWidth - AXIS;
  const H = svg.clientHeight;
  const pitch = W / 206.1;
  const scale = H / 1551;
  const X = i => Math.round(4 + i * pitch);
  const Y = v => Math.round(H - 8 - v * scale) + 0.5;
  let out = "";

  for (let k = 1; k <= 22; k++) {
    const y = Y(4 + k * 65.83);
    if (k % 2 === 0) {
      if (k < 22) out += hline(3, W, y, "#d00000", 'stroke-dasharray="1 4"');
      out += hline(W, W + 8, y, LINE);
      out += text(W + 68, y, k * 2500, RED, 'text-anchor="end"');
    } else {
      out += hline(W, W + 4, y, LINE);
    }
  }

  volumes.forEach(([kind, v], i) => {
    const x = X(i);
    const y = Y(v);
    const h = H - 8 - y;
    if (kind === "r") {
      out += `<rect x="${x - 1.5}" y="${y}" width="3" height="${h}" fill="none" stroke="${RED}" stroke-width="1.4"/>`;
    } else {
      out += `<rect x="${x - 2}" y="${y - 0.5}" width="5" height="${h + 1}" fill="${CYAN}"/>`;
    }
  });

  // nine sessions before the first bar, for the averages
  const history = [783, 783, 783, 783, 783, 772, 625, 625, 626, ...volumes.map(b => b[1])];
  const average = n => volumes.map((_, i) => {
    const part = history.slice(i + 10 - n, i + 10);
    return `${X(i)},${Y(part.reduce((a, b) => a + b) / n)}`;
  });
  out += polyline(average(5), "#e6e600", 'stroke-width="1.5"');
  out += polyline(average(10), "#e600e6", 'stroke-width="1.5"');

  // axis frame and cursor value
  const cursor = Math.round(27 * H / 516);
  out += `<rect x="${W + 1}" y="1" width="${AXIS - 2}" height="${H - 2}" fill="none" stroke="${LINE}" stroke-width="2"/>`;
  out += `<rect x="${W + 2}" y="${cursor + 0.5}" width="${AXIS - 3}" height="24" fill="#000080" stroke="${LINE}"/>`;
  out += text(W + 1, cursor + 11, "51854", "#e0e0e0");
  out += `<rect x="${W + 1.5}" y="${H - 24.5}" width="37" height="23" fill="#000" stroke="${LINE}"/>`;
  out += text(W + 3, H - 12, "X10", RED);
  svg.innerHTML = out;
}

function drawDates() {
  const svg = document.getElementById("date-plot");
  const W = svg.clientWidth;
  const X = i => Math.round(4 + i * W / 206.1);
  const months = [[18, "12"], [40, "1"], [56, "2"], [76, "3"], [118, "5"], [138, "6"], [158, "7"], [179, "8"], [202, "9"]];
  const weeks = [23, 29, 34, 44, 48, 52, 61, 66, 71, 81, 86, 108, 113, 123, 128, 133, 143, 148, 153, 163, 168, 174, 184, 190, 197];
  let out = text(4, 12, "2022年", RED);
  weeks.forEach(i => out += `<path d="M${X(i) + 0.5} 0V4" stroke="${LINE}"/>`);
  months.forEach(([i, s]) => {
    out += `<path d="M${X(i) - 1.5} 0V24" stroke="${LINE}"/>`;
    out += text(X(i), 12, s, RED);
  });
  out += `<rect x="${X(92.5)}" y="0.5" width="117" height="23" fill="#000080" stroke="${LINE}"/>`;
  out += text(X(92.5) + 2, 12, "2023/03/24/五", "#e0e0e0");
  svg.innerHTML = out;
}

function draw() {
  drawPrice();
  drawVolume();
  drawDates();
}

draw();
window.addEventListener("resize", draw);
```
